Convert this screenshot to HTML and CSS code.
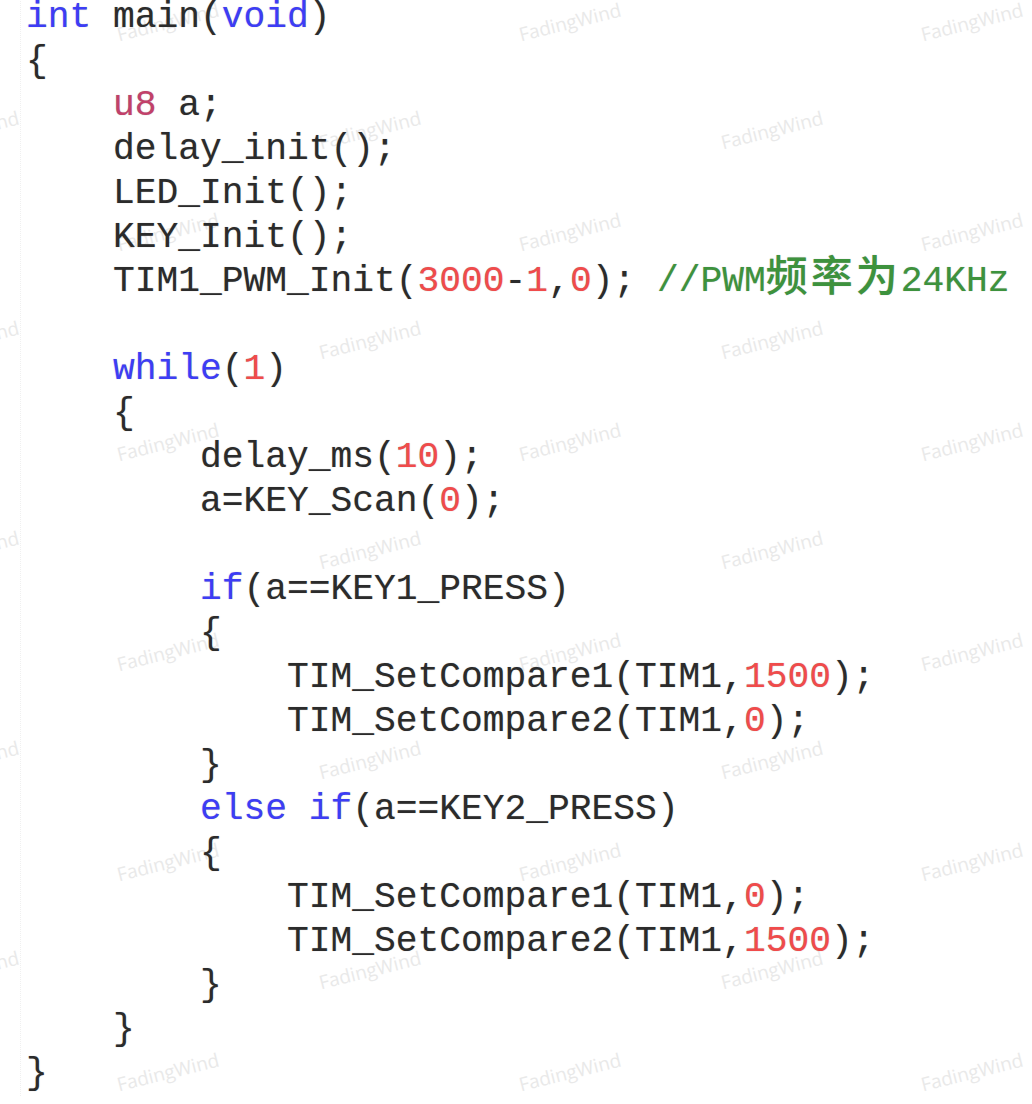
FILE: index.html
```html
<!DOCTYPE html>
<html lang="zh-CN">
<head>
<meta charset="utf-8">
<title>main.c</title>
<link rel="stylesheet" href="styles.css">
</head>
<body>
<div class="page">
  <div class="watermarks" aria-hidden="true">
    <span class="wm" style="left:168px;top:22px">FadingWind</span>
    <span class="wm" style="left:570px;top:22px">FadingWind</span>
    <span class="wm" style="left:972px;top:22px">FadingWind</span>
    <span class="wm" style="left:-32px;top:130px">FadingWind</span>
    <span class="wm" style="left:370px;top:130px">FadingWind</span>
    <span class="wm" style="left:772px;top:130px">FadingWind</span>
    <span class="wm" style="left:168px;top:232px">FadingWind</span>
    <span class="wm" style="left:570px;top:232px">FadingWind</span>
    <span class="wm" style="left:972px;top:232px">FadingWind</span>
    <span class="wm" style="left:-32px;top:340px">FadingWind</span>
    <span class="wm" style="left:370px;top:340px">FadingWind</span>
    <span class="wm" style="left:772px;top:340px">FadingWind</span>
    <span class="wm" style="left:168px;top:442px">FadingWind</span>
    <span class="wm" style="left:570px;top:442px">FadingWind</span>
    <span class="wm" style="left:972px;top:442px">FadingWind</span>
    <span class="wm" style="left:-32px;top:550px">FadingWind</span>
    <span class="wm" style="left:370px;top:550px">FadingWind</span>
    <span class="wm" style="left:772px;top:550px">FadingWind</span>
    <span class="wm" style="left:168px;top:652px">FadingWind</span>
    <span class="wm" style="left:570px;top:652px">FadingWind</span>
    <span class="wm" style="left:972px;top:652px">FadingWind</span>
    <span class="wm" style="left:-32px;top:760px">FadingWind</span>
    <span class="wm" style="left:370px;top:760px">FadingWind</span>
    <span class="wm" style="left:772px;top:760px">FadingWind</span>
    <span class="wm" style="left:168px;top:862px">FadingWind</span>
    <span class="wm" style="left:570px;top:862px">FadingWind</span>
    <span class="wm" style="left:972px;top:862px">FadingWind</span>
    <span class="wm" style="left:-32px;top:970px">FadingWind</span>
    <span class="wm" style="left:370px;top:970px">FadingWind</span>
    <span class="wm" style="left:772px;top:970px">FadingWind</span>
    <span class="wm" style="left:168px;top:1072px">FadingWind</span>
    <span class="wm" style="left:570px;top:1072px">FadingWind</span>
    <span class="wm" style="left:972px;top:1072px">FadingWind</span>
  </div>
  <div class="code">
    <div class="line"><span class="kw">int</span> main(<span class="kw">void</span>)</div>
    <div class="line">{</div>
    <div class="line">    <span class="ty">u8</span> a;</div>
    <div class="line">    delay_init();</div>
    <div class="line">    LED_Init();</div>
    <div class="line">    KEY_Init();</div>
    <div class="line">    TIM1_PWM_Init(<span class="num">3000</span>-<span class="num">1</span>,<span class="num">0</span>); <span class="cm">//PWM<span class="cjk">频率为</span>24KHz</span></div>
    <div class="line"></div>
    <div class="line">    <span class="kw">while</span>(<span class="num">1</span>)</div>
    <div class="line">    {</div>
    <div class="line">        delay_ms(<span class="num">10</span>);</div>
    <div class="line">        a=KEY_Scan(<span class="num">0</span>);</div>
    <div class="line"></div>
    <div class="line">        <span class="kw">if</span>(a==KEY1_PRESS)</div>
    <div class="line">        {</div>
    <div class="line">            TIM_SetCompare1(TIM1,<span class="num">1500</span>);</div>
    <div class="line">            TIM_SetCompare2(TIM1,<span class="num">0</span>);</div>
    <div class="line">        }</div>
    <div class="line">        <span class="kw">else</span> <span class="kw">if</span>(a==KEY2_PRESS)</div>
    <div class="line">        {</div>
    <div class="line">            TIM_SetCompare1(TIM1,<span class="num">0</span>);</div>
    <div class="line">            TIM_SetCompare2(TIM1,<span class="num">1500</span>);</div>
    <div class="line">        }</div>
    <div class="line">    }</div>
    <div class="line">}</div>
  </div>
</div>
</body>
</html>
```
FILE: styles.css
```css
html, body {
  margin: 0;
  padding: 0;
  background: #ffffff;
}

.page {
  position: relative;
  width: 1032px;
  height: 1104px;
  overflow: hidden;
  background: #ffffff;
}

.watermarks {
  position: absolute;
  inset: 0;
  z-index: 0;
}

.wm {
  position: absolute;
  transform: translate(-50%, -50%) rotate(-14deg);
  font-family: "Open Sans", "Noto Sans", sans-serif;
  font-size: 19px;
  color: #e9e9e9;
  white-space: nowrap;
}

.code {
  position: relative;
  z-index: 1;
  margin-left: 20px;
  margin-top: -4px;
  padding-left: 5px;
  border-left: 1px dotted #f0f0f0;
  font-family: "Liberation Mono", "Courier New", monospace;
  font-size: 36.25px;
  color: #2b2b2b;
  text-shadow: 0 0 1px rgba(40, 40, 40, 0.35);
}

.line {
  height: 44px;
  line-height: 44px;
  white-space: pre;
}

.kw { color: #3d3df5; }
.ty { color: #c2406a; }
.num { color: #f04b4b; }
.cm { color: #3d923d; }

.cjk {
  font-family: "Noto Sans CJK SC", sans-serif;
  font-size: 42px;
  font-weight: 500;
  line-height: 0;
  letter-spacing: 3px;
}
```
